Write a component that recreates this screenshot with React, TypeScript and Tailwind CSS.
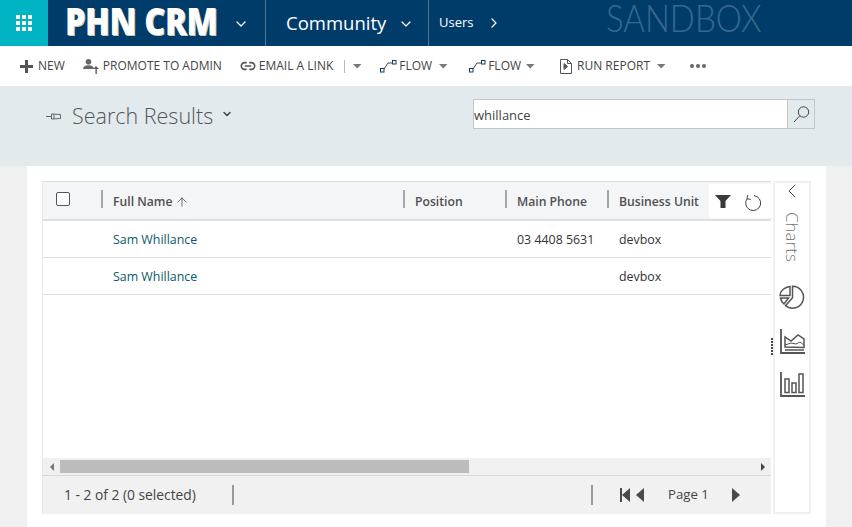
import { ChevronDown, ChevronRight, ChevronLeft, Link2, ArrowUp } from 'lucide-react';

const font = "font-['Open_Sans','Noto_Sans',sans-serif]";

function Caret({ className = '' }: { className?: string }) {
  return (
    <svg width="9" height="5" viewBox="0 0 9 5" className={className}>
      <path d="M0 0h8.5L4.25 4.5z" fill="#7a7a7a" />
    </svg>
  );
}

function FlowIcon() {
  return (
    <svg width="17" height="13" viewBox="0 0 17 13" fill="none" stroke="#0f3d62" strokeWidth="1">
      <rect x="0.5" y="8.5" width="3.5" height="3.5" />
      <rect x="12.5" y="0.5" width="3.5" height="3.5" />
      <path d="M4 9 8 3h4.5" stroke="#444" />
    </svg>
  );
}

function PlusIcon() {
  return (
    <svg width="13" height="13" viewBox="0 0 13 13" fill="#555">
      <path d="M5 0h3v5h5v3H8v5H5V8H0V5h5z" />
    </svg>
  );
}

function PromoteIcon() {
  return (
    <svg width="17" height="15" viewBox="0 0 17 15" fill="#666">
      <circle cx="5.500" cy="2.800" r="2.800" />
      <path d="M0 10c0-2.500 2.200-3.800 5.500-3.800S11 7.500 11 10z" />
      <path d="M12.500 15V10h-2L13 7l2.800 3h-2v5z" fill="#555" />
    </svg>
  );
}

function ReportIcon() {
  return (
    <svg width="12" height="15" viewBox="0 0 12 15" fill="none" stroke="#555" strokeWidth="1">
      <path d="M.5.500h7l4 4v10h-11z" />
      <path d="M7.500.500v4h4" />
      <path d="M4 4.500v6l3.500-3z" fill="#555" />
    </svg>
  );
}

function PinIcon() {
  return (
    <svg width="15" height="7" viewBox="0 0 15 7" fill="none" stroke="#666" strokeWidth="1">
      <path d="M0 3.500h5M5.500 1l9 .5v4l-9 .5zM8 1v5" />
    </svg>
  );
}

function SearchGlass() {
  return (
    <svg width="17" height="17" viewBox="0 0 17 17" fill="none" stroke="#444" strokeWidth="1">
      <circle cx="10.500" cy="6" r="5.200" />
      <path d="M6.800 9.800 1 16" />
    </svg>
  );
}

function Funnel() {
  return (
    <svg width="16" height="13" viewBox="0 0 16 13" fill="#3a3a3a">
      <path d="M0 0h16l-5.500 6v7h-5V6z" />
    </svg>
  );
}

function RefreshIcon() {
  return (
    <svg width="18" height="19" viewBox="0 0 18 19" fill="none" stroke="#3f4a55" strokeWidth="1">
      <path d="M10 2.600a7.500 7.500 0 1 1-7 3.200" />
      <path d="M3.800 2 3 5.800l3.800.6" />
    </svg>
  );
}

function PieIcon() {
  return (
    <svg width="26" height="24" viewBox="0 0 26 24" fill="none" stroke="#555" strokeWidth="1.500">
      <path d="M11 1.500C5.500 2 1 6 1 10.500h10z" />
      <path d="M13.500 1.200a11 11 0 1 1-7 19.500l7-8z" />
      <path d="M1.500 13h8l-4.500 6c-2-1.500-3-3.500-3.500-6z" />
    </svg>
  );
}

function AreaIcon() {
  return (
    <svg width="25" height="25" viewBox="0 0 25 25" fill="none" stroke="#555" strokeWidth="1.500">
      <path d="M1 0v24h24" strokeWidth="1.800" />
      <path d="M5 18V8l6 4 7-6 6 4v8.500z" />
      <path d="M5 16l6-2 5 1 4-2 4 3" strokeWidth="1" />
      <path d="M5 21h19" />
    </svg>
  );
}

function BarIcon() {
  return (
    <svg width="25" height="25" viewBox="0 0 25 25" fill="none" stroke="#555" strokeWidth="1.500">
      <path d="M1 0v24h24" strokeWidth="1.800" />
      <rect x="5" y="7" width="4" height="13.500" />
      <rect x="12" y="11" width="4" height="9.500" />
      <rect x="19" y="2" width="4" height="18.500" />
    </svg>
  );
}

function HeaderCol({ label, width, arrow }: { label: string; width: string; arrow?: boolean }) {
  return (
    <div className={`flex items-center ${width}`}>
      <span className="w-[2px] h-[18px] bg-[#a6a6a6] mr-[10px] mt-[-4px]"></span>
      <span className="text-[12.200px] font-semibold text-[#505050] whitespace-nowrap pt-[4px]">{label}</span>
      {arrow && <ArrowUp size={14} className="ml-[3px] mt-[3px] text-[#444]" strokeWidth={1.300} />}
    </div>
  );
}

function Row({ phone }: { phone?: string }) {
  return (
    <div className="flex items-center h-[37px] border-b border-[#dedede] text-[12.400px] pt-[2px]">
      <div className="w-[70px]"></div>
      <div className="w-[404px] text-[#0a5a70]">Sam Whillance</div>
      <div className="w-[102px] text-[#333]">{phone}</div>
      <div className="text-[#333]">devbox</div>
    </div>
  );
}

export default function App() {
  return (
    <div className={`w-[852px] h-[527px] overflow-hidden flex flex-col bg-[#f0f0f0] ${font}`}>
      {/* Nav bar */}
      <div className="flex items-stretch h-[46px] bg-[#003c69] text-white shrink-0">
        <div className="w-[48px] bg-[#00b4c4] flex items-center justify-center">
          <div className="grid grid-cols-3 gap-[2px]">
            {Array.from({ length: 9 }).map((_, i) => (
              <span key={i} className="w-[4px] h-[4px] bg-white"></span>
            ))}
          </div>
        </div>
        <div className="flex items-center w-[218px] border-r border-[#4d7595] pl-[17px]">
          <span className="shrink-0 text-[32.300px] leading-none font-extrabold text-white tracking-[-0.3px] whitespace-nowrap scale-y-[1.150] mb-[6px] [text-shadow:1px_1px_0_#cfcab6]">PHN CRM</span>
          <ChevronDown size={16} className="ml-[16px] mt-[2px]" strokeWidth={1.800} />
        </div>
        <div className="flex items-center w-[163px] border-r border-[#4d7595] pl-[20px]">
          <span className="text-[18.500px] font-normal">Community</span>
          <ChevronDown size={16} className="ml-[12px] mt-[2px]" strokeWidth={1.800} />
        </div>
        <div className="flex items-center pl-[10px] w-[177px]">
          <span className="text-[13px]">Users</span>
          <ChevronRight size={16} className="ml-[13px]" strokeWidth={1.800} />
        </div>
        <div className="font-['Lato',sans-serif] text-[33px] leading-[30px] h-[30px] mt-[2px] font-light text-[#386890] scale-y-[1.120]">SANDBOX</div>
      </div>

      {/* Command bar */}
      <div className="flex items-center h-[40px] bg-white shrink-0 pl-[20px] text-[12px] text-[#444]">
        <PlusIcon />
        <span className="ml-[5px] mr-[18px]">NEW</span>
        <PromoteIcon />
        <span className="ml-[3px] mr-[18px]">PROMOTE TO ADMIN</span>
        <Link2 size={16} className="text-[#555] mr-[3px]" strokeWidth={2.500} />
        <span>EMAIL A LINK</span>
        <span className="w-[1px] h-[13px] bg-[#bbb] ml-[11px] mr-[8px]"></span>
        <Caret className="mr-[18px]" />
        <FlowIcon />
        <span className="ml-[2px] mr-[7px]">FLOW</span>
        <Caret className="mr-[21px]" />
        <FlowIcon />
        <span className="ml-[2px] mr-[5px]">FLOW</span>
        <Caret className="mr-[25px]" />
        <ReportIcon />
        <span className="ml-[5px] mr-[7px]">RUN REPORT</span>
        <Caret className="mr-[24px]" />
        <div className="flex gap-[2px]">
          <span className="w-[4px] h-[4px] rounded-full bg-[#666]"></span>
          <span className="w-[4px] h-[4px] rounded-full bg-[#666]"></span>
          <span className="w-[4px] h-[4px] rounded-full bg-[#666]"></span>
        </div>
      </div>

      {/* Title band */}
      <div className="flex items-start h-[80px] bg-[#e3eaee] shrink-0 pl-[46px] pt-[13px]">
        <div className="flex items-center h-[34px] w-[427px]">
          <PinIcon />
          <span className="ml-[11px] text-[21.500px] font-light text-[#555]">Search Results</span>
          <ChevronDown size={12} className="ml-[8px] mb-[4px] text-[#444]" strokeWidth={3} />
        </div>
        <div className="flex h-[30px] border border-[#c3c6c8] bg-white">
          <div className="w-[313px] text-[13px] text-[#444] leading-[30px]">whillance</div>
          <div className="w-[27px] border-l border-[#c3c6c8] bg-[#e3eaee] flex items-center justify-center">
            <SearchGlass />
          </div>
        </div>
      </div>

      {/* Main panel */}
      <div className="ml-[27px] w-[799px] flex-1 bg-white flex pt-[15px] pl-[15px] min-h-0">
        <div className="w-[729px] h-[333px] flex flex-col border-l border-[#e8e8e8] border-t border-t-[#dcdcdc]">
          <div className="flex h-[39px] border-b-2 border-[#dedede] bg-[#f4f5f7] shrink-0">
            <div className="w-[58px] flex items-center pl-[13px]">
              <span className="w-[14px] h-[14px] border border-[#555] rounded-[2px] bg-white mt-[-4px]"></span>
            </div>
            <HeaderCol label="Full Name" width="w-[302px]" arrow />
            <HeaderCol label="Position" width="w-[102px]" />
            <HeaderCol label="Main Phone" width="w-[102px]" />
            <HeaderCol label="Business Unit" width="w-[102px]" />
            <div className="flex-1 bg-white flex items-center pl-[6px] gap-[13px] mt-[2px] mb-[1px]">
              <Funnel />
              <div className="mt-[2px]">
                <RefreshIcon />
              </div>
            </div>
          </div>
          <Row phone="03 4408 5631" />
          <Row />
          <div className="flex-1"></div>
          {/* Scrollbar */}
          <div className="flex items-center h-[17px] bg-[#f0f0f0] shrink-0">
            <div className="w-[17px] flex justify-center">
              <span className="w-0 h-0 border-y-[4px] border-y-transparent border-r-[4px] border-r-[#777]"></span>
            </div>
            <div className="w-[409px] h-[13px] bg-[#bcbcbc]"></div>
            <div className="flex-1 flex justify-end pr-[6px]">
              <span className="w-0 h-0 border-y-[4px] border-y-transparent border-l-[4px] border-l-[#444]"></span>
            </div>
          </div>
          {/* Footer */}
          <div className="flex items-center h-[39px] bg-[#f1f1f1] border-t border-[#d8d8d8] shrink-0 text-[13.800px] text-[#444]">
            <span className="ml-[21px] w-[168px] whitespace-nowrap">1 - 2 of 2 (0 selected)</span>
            <span className="w-[2px] h-[20px] bg-[#999]"></span>
            <span className="w-[2px] h-[20px] bg-[#999] ml-[357px]"></span>
            <svg width="10" height="14" viewBox="0 0 10 14" fill="#4a4a4a" className="ml-[27px]">
              <path d="M0 0h2v14H0zM10 0v14L2 7z" />
            </svg>
            <svg width="8" height="14" viewBox="0 0 8 14" fill="#4a4a4a" className="ml-[6px]">
              <path d="M8 0v14L0 7z" />
            </svg>
            <span className="ml-[24px] text-[13.200px]">Page 1</span>
            <svg width="8" height="14" viewBox="0 0 8 14" fill="#4a4a4a" className="ml-[23px]">
              <path d="M0 0v14l8-7z" />
            </svg>
          </div>
        </div>
        {/* Charts rail */}
        <div className="relative w-[38px] h-[333px] ml-[2px] border-2 border-[#f0f0f0] flex flex-col items-center">
          <ChevronLeft size={24} strokeWidth={1} className="text-[#444] mt-[-4px]" />
          <span className="[writing-mode:vertical-rl] text-[17px] font-light text-[#777] mt-[9px] leading-none">Charts</span>
          <div className="mt-[23px]">
            <PieIcon />
          </div>
          <div className="mt-[20px]">
            <AreaIcon />
          </div>
          <div className="mt-[18px]">
            <BarIcon />
          </div>
          <div className="absolute left-[-4px] top-[155px] flex flex-col gap-[1px]">
            {Array.from({ length: 6 }).map((_, i) => (
              <span key={i} className="w-[2px] h-[2px] bg-[#444]"></span>
            ))}
          </div>
        </div>
      </div>
    </div>
  );
}
